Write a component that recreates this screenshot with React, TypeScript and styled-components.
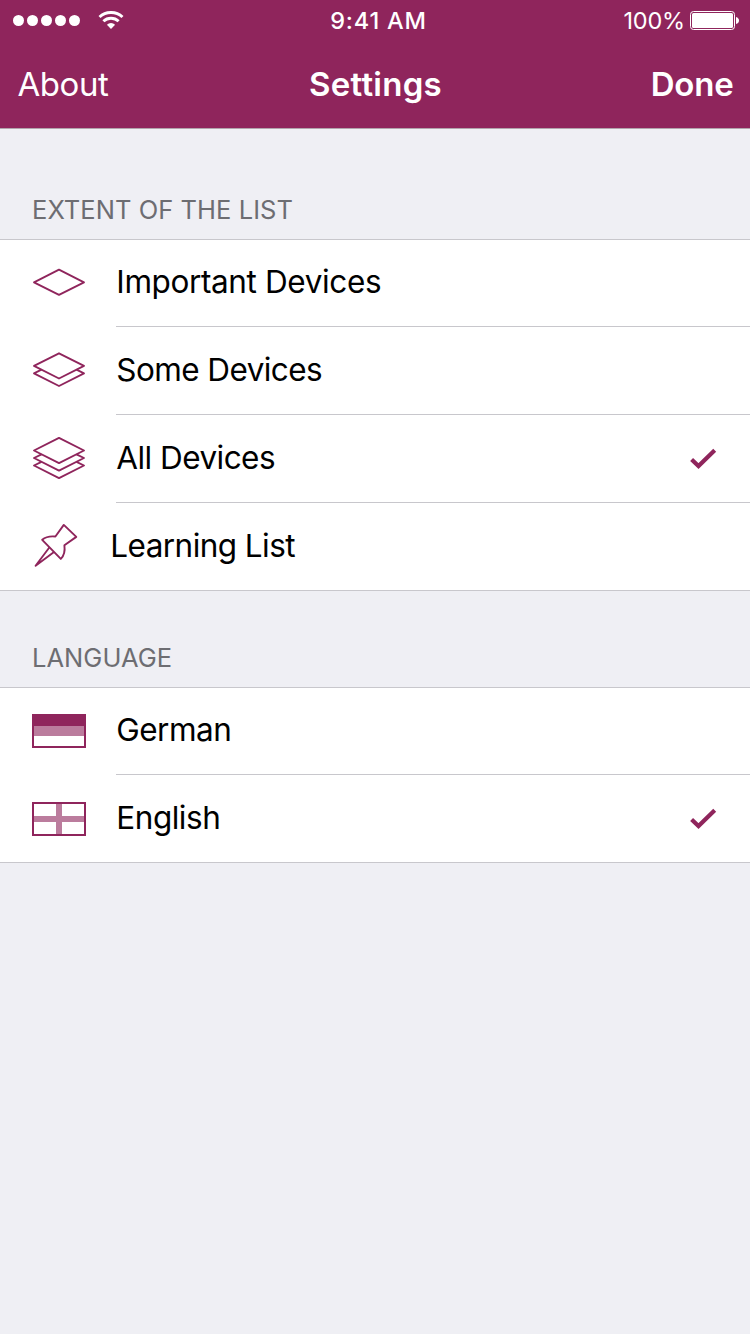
import React from "react";
import styled, { createGlobalStyle } from "styled-components";

const brand = "#8f255c";
const line = "#c8c7cc";

const GlobalStyle = createGlobalStyle`
  * { box-sizing: border-box; }
  body {
    margin: 0;
    background: #efeff4;
    color: #000;
    font-family: Inter, "Liberation Sans", sans-serif;
    -webkit-font-smoothing: antialiased;
  }
`;

const Screen = styled.main`
  min-height: 1334px;
  background: #efeff4;
`;

const Header = styled.header`
  height: 129px;
  background: ${brand};
  border-bottom: 1px solid #b2a5ad;
  color: #fff;
`;

const StatusBar = styled.div`
  display: grid;
  grid-template-columns: 1fr auto 1fr;
  align-items: center;
  height: 41px;
  padding: 0 11px 0 13px;
`;

const Signal = styled.div`
  display: flex;
  align-items: center;
  gap: 16.5px;
`;

const Time = styled.time`
  font-size: 23.5px;
  line-height: 41px;
  font-weight: 500;
  letter-spacing: 0.8px;
  padding-left: 5px;
`;

const Power = styled.div`
  display: flex;
  align-items: center;
  justify-content: flex-end;
  gap: 5px;
  font-size: 23.5px;
  line-height: 41px;
  letter-spacing: -0.2px;
`;

const NavBar = styled.nav`
  display: grid;
  grid-template-columns: 1fr auto 1fr;
  align-items: center;
  height: 87px;
  padding: 0 16.5px 1px 17.5px;
`;

const NavButton = styled.button<{ $strong?: boolean }>`
  justify-self: ${(p) => (p.$strong ? "end" : "start")};
  padding: 0;
  border: 0;
  background: none;
  color: inherit;
  font: inherit;
  font-size: 33px;
  font-weight: ${(p) => (p.$strong ? 600 : 400)};
  letter-spacing: ${(p) => (p.$strong ? "-0.2px" : "-0.45px")};
`;

const Title = styled.h1`
  margin: 0;
  font-size: 33px;
  font-weight: 600;
  letter-spacing: 0.25px;
`;

const SectionTitle = styled.h2<{ $height: number }>`
  display: flex;
  align-items: flex-end;
  height: ${(p) => p.$height}px;
  margin: 0;
  padding: 0 32px 13px;
  color: #6d6d72;
  font-size: 25.5px;
  line-height: 32px;
  font-weight: 400;
  letter-spacing: 0.05px;
`;

const List = styled.ul`
  margin: 0;
  padding: 0;
  list-style: none;
  background: #fff;
  border-top: 1px solid ${line};
  border-bottom: 1px solid ${line};
`;

const Row = styled.li`
  display: flex;
  height: 88px;
  padding-left: 32px;
  &:first-child,
  &:last-child { height: 87px; }
`;

const IconCell = styled.span<{ $width: number }>`
  display: flex;
  align-items: center;
  flex: 0 0 ${(p) => p.$width}px;
  height: 86px;
`;

const RowBody = styled.div`
  display: flex;
  flex: 1;
  align-items: center;
  justify-content: space-between;
  padding-right: 33.5px;
  border-bottom: 1px solid ${line};
  ${Row}:last-child & { border-bottom: 0; }
`;

const Label = styled.span<{ $tracking: number }>`
  margin-bottom: 2px;
  padding-left: 0.3px;
  font-size: 31.5px;
  line-height: 40px;
  letter-spacing: ${(p) => p.$tracking}px;
`;

const Layers = ({ count }: { count: number }) => (
  <svg width="54" height="44" viewBox="0 0 54 44" fill="none" stroke={brand} strokeWidth="1.9" strokeLinejoin="round">
    <g transform={`translate(0 ${21.3 - (count - 1) * 3.4})`}>
      <path d="M27 -12.6 52 0 27 12.6 2 0Z" />
      {Array.from({ length: count - 1 }, (_, i) => (
        <path key={i} transform={`translate(0 ${(i + 1) * 7.5})`} d="M9.5 -3.7 2 0 27 12.6 52 0 44.5 -3.7" />
      ))}
    </g>
  </svg>
);

const Pin = () => (
  <svg width="48" height="48" viewBox="0 0 48 48" fill="none" stroke={brand} strokeWidth="1.9" strokeLinejoin="round">
    <path d="M31.8 2.9 44.3 14.9 32.4 23.3Q33.6 32 28.8 36.9L10.2 17.8Q15 13.6 23.4 14.5Z" />
    <path d="M17.5 25.3 3.6 43.8 22 29.9" />
  </svg>
);

const GermanFlag = () => (
  <svg width="54" height="34" viewBox="0 0 54 34">
    <path fill={brand} d="M0 0h54v34H0z" />
    <path fill="#bb7c9d" d="M2 12h50v10H2z" />
    <path fill="#fff" d="M2 22h50v10H2z" />
  </svg>
);

const EnglishFlag = () => (
  <svg width="54" height="36" viewBox="0 -2 54 36">
    <path fill={brand} d="M0 0h54v34H0z" />
    <path fill="#fff" d="M2 2h50v30H2z" />
    <path fill="#bb7c9d" d="M24 2h6v12h22v6H30v12h-6V20H2v-6h22z" />
  </svg>
);

const Check = () => (
  <svg width="28" height="22" viewBox="0 0 28 22" fill="none" stroke={brand} strokeWidth="4.2">
    <path d="M2.6 11.5 9.5 18 25.7 2.2" />
  </svg>
);

const Wifi = () => (
  <svg width="26" height="19" viewBox="0 0 26 19" fill="none" stroke="#fff" strokeWidth="2.9">
    <path d="M1.5 6A16.8 16.8 0 0 1 24.5 6" />
    <path d="M5.4 10.3A11 11 0 0 1 20.6 10.3" />
    <path fill="#fff" stroke="none" d="M13 18 8.9 13.7A6 6 0 0 1 17.1 13.7Z" />
  </svg>
);

const SignalDots = () => (
  <svg width="68" height="11" viewBox="0 0 68 11" fill="#fff">
    {[5.5, 19.5, 33.5, 47.5, 61.5].map((x) => (
      <circle key={x} cx={x} cy="5.5" r="5.5" />
    ))}
  </svg>
);

const Battery = () => (
  <svg width="49" height="19" viewBox="0 0 49 19">
    <rect x="0.5" y="0.5" width="44" height="18" rx="3" fill="none" stroke="#fff" />
    <rect x="2" y="2" width="41" height="15" rx="1.5" fill="#fff" />
    <path fill="#fff" d="M46 6Q49 7 49 9.5T46 13Z" />
  </svg>
);

interface Item {
  label: string;
  icon: React.ReactNode;
  tracking: number;
  iconWidth?: number;
  checked?: boolean;
}

const extents: Item[] = [
  { label: "Important Devices", icon: <Layers count={1} />, tracking: -0.38 },
  { label: "Some Devices", icon: <Layers count={2} />, tracking: -0.58 },
  { label: "All Devices", icon: <Layers count={3} />, tracking: -0.54, checked: true },
  { label: "Learning List", icon: <Pin />, tracking: -0.56, iconWidth: 78 },
];

const languages: Item[] = [
  { label: "German", icon: <GermanFlag />, tracking: -0.52 },
  { label: "English", icon: <EnglishFlag />, tracking: -0.48, checked: true },
];

const OptionList = ({ items }: { items: Item[] }) => (
  <List>
    {items.map(({ label, icon, tracking, iconWidth = 84, checked }) => (
      <Row key={label}>
        <IconCell $width={iconWidth}>{icon}</IconCell>
        <RowBody>
          <Label $tracking={tracking}>{label}</Label>
          {checked && <Check />}
        </RowBody>
      </Row>
    ))}
  </List>
);

export default function App() {
  return (
    <Screen>
      <GlobalStyle />
      <Header>
        <StatusBar>
          <Signal>
            <SignalDots />
            <Wifi />
          </Signal>
          <Time>9:41 AM</Time>
          <Power>
            100%
            <Battery />
          </Power>
        </StatusBar>
        <NavBar>
          <NavButton>About</NavButton>
          <Title>Settings</Title>
          <NavButton $strong>Done</NavButton>
        </NavBar>
      </Header>
      <SectionTitle $height={110}>EXTENT OF THE LIST</SectionTitle>
      <OptionList items={extents} />
      <SectionTitle $height={96}>LANGUAGE</SectionTitle>
      <OptionList items={languages} />
    </Screen>
  );
}
